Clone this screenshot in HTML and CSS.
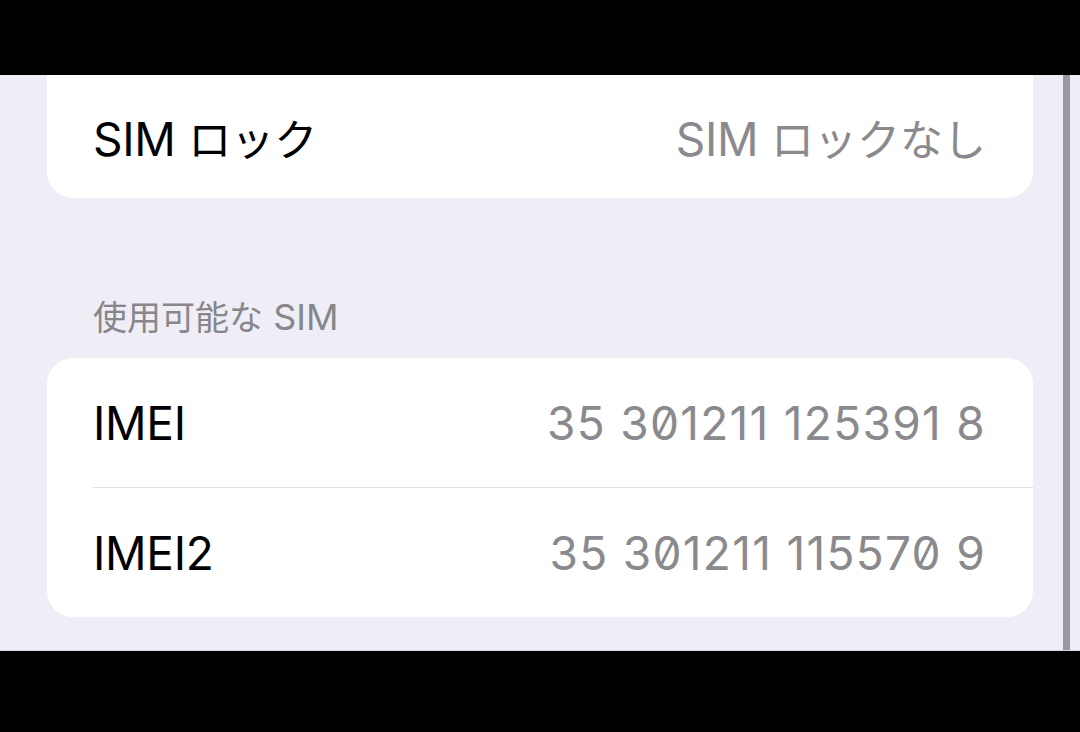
FILE: index.html
```html
<!DOCTYPE html>
<html lang="ja">
<head>
    <meta charset="utf-8">
    <title>情報</title>
    <link rel="stylesheet" href="styles.css">
</head>
<body>
    <div class="screen">
        <div class="bar"></div>

        <div class="view">
            <div class="content">
                <div class="card card-top">
                    <div class="row">
                        <span class="label">SIM <span class="ja">ロック</span></span>
                        <span class="value">SIM <span class="ja">ロックなし</span></span>
                    </div>
                </div>

                <div class="section-head"><span class="ja">使用可能な</span> SIM</div>

                <div class="card">
                    <div class="row">
                        <span class="label">IMEI</span>
                        <span class="value num">35 301211 125391 8</span>
                    </div>
                    <div class="row">
                        <span class="label">IMEI2</span>
                        <span class="value num">35 301211 115570 9</span>
                    </div>
                </div>
            </div>
            <div class="scroll-track"></div>
            <div class="edge"></div>
        </div>

        <div class="bar bar-bottom"></div>
    </div>
</body>
</html>
```

FILE: styles.css
```css
body { margin: 0; background: #000; font-family: "Inter", "Noto Sans CJK JP", sans-serif; }
.screen { width: 1080px; height: 732px; display: flex; flex-direction: column; overflow: hidden; }
.bar { height: 75px; background: #000; flex: none; }
.bar-bottom { height: 82px; border-top: 1px solid #d9d9dd; box-sizing: border-box; }
.view { flex: 1; display: flex; background: #efeef6; }
.content { flex: 1; padding: 0 30px 0 47px; }
.scroll-track { width: 7px; background: #99989e; }
.edge { width: 10px; }

.card { background: #fff; border-radius: 26px; overflow: hidden; }
.card-top { border-radius: 0 0 26px 26px; }
.card-top .row { height: 123px; }

.row { height: 129px; margin-left: 46px; padding-right: 47px; display: flex; align-items: center; justify-content: space-between; }
.row + .row { border-top: 1px solid #e0e0e4; }
.label { font-size: 46px; color: #000; letter-spacing: -0.3px; }
.value { font-size: 46px; color: #8a8a8e; letter-spacing: -0.3px; }
.row .ja { font-size: 43px; letter-spacing: 0; }
.num { font-feature-settings: "zero"; letter-spacing: 1.3px; }

.section-head { height: 160px; box-sizing: border-box; padding: 97px 46px 19px; line-height: 44px; font-size: 36px; color: #86868b; }
.section-head .ja { font-size: 34px; }
```
